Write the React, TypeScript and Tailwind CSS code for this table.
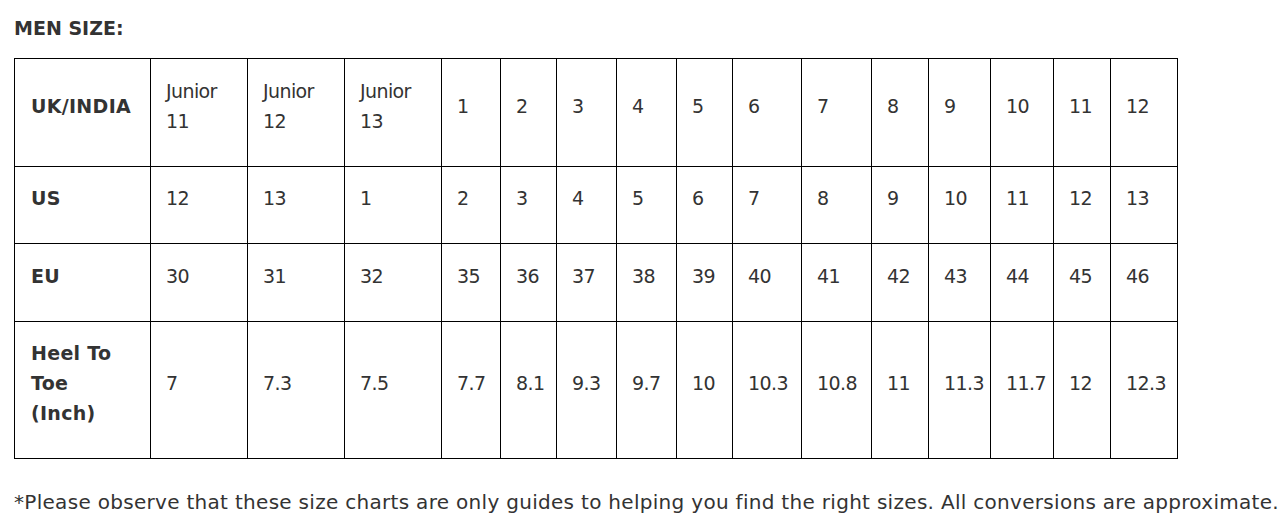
import React from "react";

const widths = [136, 97, 97, 97, 59, 56, 60, 60, 56, 69, 70, 57, 62, 63, 57, 67];

type Row = { label: React.ReactNode; cells: React.ReactNode[]; h: string };

const rows: Row[] = [
  {
    label: "UK/INDIA",
    h: "h-[108px]",
    cells: [
      <>Junior<br />11</>,
      <>Junior<br />12</>,
      <>Junior<br />13</>,
      "1", "2", "3", "4", "5", "6", "7", "8", "9", "10", "11", "12",
    ],
  },
  {
    label: "US",
    h: "h-[77px]",
    cells: ["12", "13", "1", "2", "3", "4", "5", "6", "7", "8", "9", "10", "11", "12", "13"],
  },
  {
    label: "EU",
    h: "h-[78px]",
    cells: ["30", "31", "32", "35", "36", "37", "38", "39", "40", "41", "42", "43", "44", "45", "46"],
  },
  {
    label: <>Heel To<br />Toe<br />(Inch)</>,
    h: "h-[137px]",
    cells: ["7", "7.3", "7.5", "7.7", "8.1", "9.3", "9.7", "10", "10.3", "10.8", "11", "11.3", "11.7", "12", "12.3"],
  },
];

export default function App() {
  return (
    <div className="w-[1279px] h-[523px] bg-white text-[#333333] font-['DejaVu_Sans',sans-serif] overflow-hidden">
      <div className="pl-[14px] pt-[15px]">
        <h2 className="text-[19px] leading-[26px] font-bold">MEN SIZE:</h2>
        <table className="mt-[17px] table-fixed border-collapse text-[19px] leading-[30px]" style={{ width: 1164 }}>
          <colgroup>
            {widths.map((w, i) => (
              <col key={i} style={{ width: w }} />
            ))}
          </colgroup>
          <tbody>
            {rows.map((r, ri) => (
              <tr key={ri} className={r.h}>
                <td className="border border-black align-middle pl-[16px] pr-[2px] pt-[14px] pb-[28px] font-bold whitespace-nowrap tracking-[0.3px]">
                  {r.label}
                </td>
                {r.cells.map((c, ci) => (
                  <td key={ci} className="border border-black align-middle pl-[15px] pr-0 pt-[14px] pb-[28px] whitespace-nowrap tracking-[-0.6px]">
                    {c}
                  </td>
                ))}
              </tr>
            ))}
          </tbody>
        </table>
        <p className="mt-[28px] text-[20px] leading-[30px] tracking-[0.3px] whitespace-nowrap">
          *Please observe that these size charts are only guides to helping you find the right sizes. All conversions are approximate.
        </p>
      </div>
    </div>
  );
}
